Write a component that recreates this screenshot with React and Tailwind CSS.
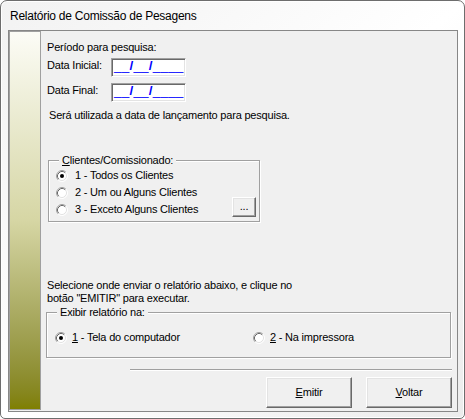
import React from "react";

const Radio = ({ checked }) => (
  <svg width="12" height="12" viewBox="0 0 12 12" className="shrink-0">
    <circle cx="6" cy="6" r="5" fill="#fff" />
    <path d="M2.11 9.89 A5.5 5.5 0 0 1 9.89 2.11" fill="none" stroke="#a0a0a0" />
    <path d="M9.89 2.11 A5.5 5.5 0 0 1 2.11 9.89" fill="none" stroke="#fff" />
    <path d="M2.82 9.18 A4.5 4.5 0 0 1 9.18 2.82" fill="none" stroke="#696969" />
    <path d="M9.18 2.82 A4.5 4.5 0 0 1 2.82 9.18" fill="none" stroke="#e3e3e3" />
    {checked && <circle cx="6" cy="6" r="2" fill="#000" />}
  </svg>
);

const DateBox = () => (
  <div className="w-[75px] h-[19px] bg-white border border-t-[#a0a0a0] border-l-[#a0a0a0] border-b-white border-r-white shadow-[inset_1px_1px_0_#696969,inset_-1px_-1px_0_#e3e3e3] pl-[2px]">
    <span className="block text-[13.5px] leading-[13px] tracking-[0.2px] text-[#0000ff] font-['Liberation_Sans',Arial,sans-serif]">
      __<b>/</b>__<b>/</b>____
    </span>
  </div>
);

const Button = ({ children }) => (
  <button className="w-[86px] h-[31px] bg-[#f0f0f0] border border-t-white border-l-white border-r-[#696969] border-b-[#696969] shadow-[inset_-1px_-1px_0_#a0a0a0,inset_1px_1px_0_#e3e3e3] text-[11px] leading-[13px] tracking-[-0.2px] text-black">
    {children}
  </button>
);

export default function App() {
  return (
    <div className="w-[465px] h-[419px] flex flex-col bg-gradient-to-br from-[#f2f2f2] via-white to-[#ececec] border border-[#6d6d6d] rounded-t-[7px] rounded-b-[5px] shadow-[inset_0_0_0_1px_#fff] font-['Liberation_Sans',Arial,sans-serif] text-black">
      {/* title bar */}
      <div className="h-[29px] shrink-0 flex items-center pl-[9px] text-[12px] leading-[16px] tracking-[-0.25px]">
        Relatório de Comissão de Pesagens
      </div>

      {/* client area */}
      <div className="ml-[7px] mr-[6px] mb-[6px] flex-1 flex border border-[#878787] bg-[#f0f0f0] text-[11px] leading-[13px] tracking-[-0.2px]">
        <div className="w-[32px] shrink-0 border border-[#a0a0a0] mb-px bg-gradient-to-b from-[#fcfcf6] via-[#d6d6a4] to-[#7f7f00]" />

        <div className="flex-1 flex flex-col pl-[6px] pr-[5px] pt-[10px]">
          <div>Período para pesquisa:</div>

          <div className="flex items-start mt-[4px]">
            <span className="w-[64px] mt-px">Data Inicial:</span>
            <DateBox />
          </div>
          <div className="flex items-start mt-[6px]">
            <span className="w-[64px] mt-px">Data Final:</span>
            <DateBox />
          </div>

          <div className="mt-[7px] ml-[2px]">Será utilizada a data de lançamento para pesquisa.</div>

          <fieldset className="mt-[32px] ml-px w-[212px] border border-[#a0a0a0] shadow-[inset_1px_1px_0_#fff,1px_1px_0_#fff] pb-[3px] flex">
            <legend className="ml-[10px] px-[3px] bg-[#f0f0f0]">
              <u>C</u>lientes/Comissionado:
            </legend>
            <div className="flex-1 flex flex-col">
              <div className="h-[17px] flex items-center pl-[7px] gap-[7px]">
                <Radio checked />
                <span>1 - Todos os Clientes</span>
              </div>
              <div className="h-[17px] flex items-center pl-[7px] gap-[7px]">
                <Radio />
                <span>2 - Um ou Alguns Clientes</span>
              </div>
              <div className="h-[17px] flex items-center pl-[7px] gap-[7px]">
                <Radio />
                <span>3 - Exceto Alguns Clientes</span>
              </div>
            </div>
            <button className="self-end mb-px mr-[3px] w-[24px] h-[20px] bg-[#f0f0f0] border border-t-white border-l-white border-r-[#696969] border-b-[#696969] shadow-[inset_-1px_-1px_0_#a0a0a0,inset_1px_1px_0_#e3e3e3] text-[11px] leading-[11px] pb-[2px]">
              ...
            </button>
          </fieldset>

          <div className="mt-[57px]">
            Selecione onde enviar o relatório abaixo, e clique no
            <br />
            botão "EMITIR" para executar.
          </div>

          <fieldset className="mt-px -ml-px w-[405px] border border-[#a0a0a0] shadow-[inset_1px_1px_0_#fff,1px_1px_0_#fff] pb-[11px]">
            <legend className="ml-[10px] px-[3px] bg-[#f0f0f0]">Exibir relatório na:</legend>
            <div className="mt-[10px] h-[17px] flex items-center">
              <div className="w-[206px] flex items-center pl-[8px] gap-[5px]">
                <Radio checked />
                <span>
                  <u>1</u> - Tela do computador
                </span>
              </div>
              <div className="flex items-center gap-[5px]">
                <Radio />
                <span>
                  <u>2</u> - Na impressora
                </span>
              </div>
            </div>
          </fieldset>

          <div className="mt-[11px] ml-[83px] border-t border-t-[#a0a0a0] border-b border-b-white" />

          <div className="mt-[6px] flex justify-end gap-[14px]">
            <Button>
              <u>E</u>mitir
            </Button>
            <Button>
              <u>V</u>oltar
            </Button>
          </div>
        </div>
      </div>
    </div>
  );
}
